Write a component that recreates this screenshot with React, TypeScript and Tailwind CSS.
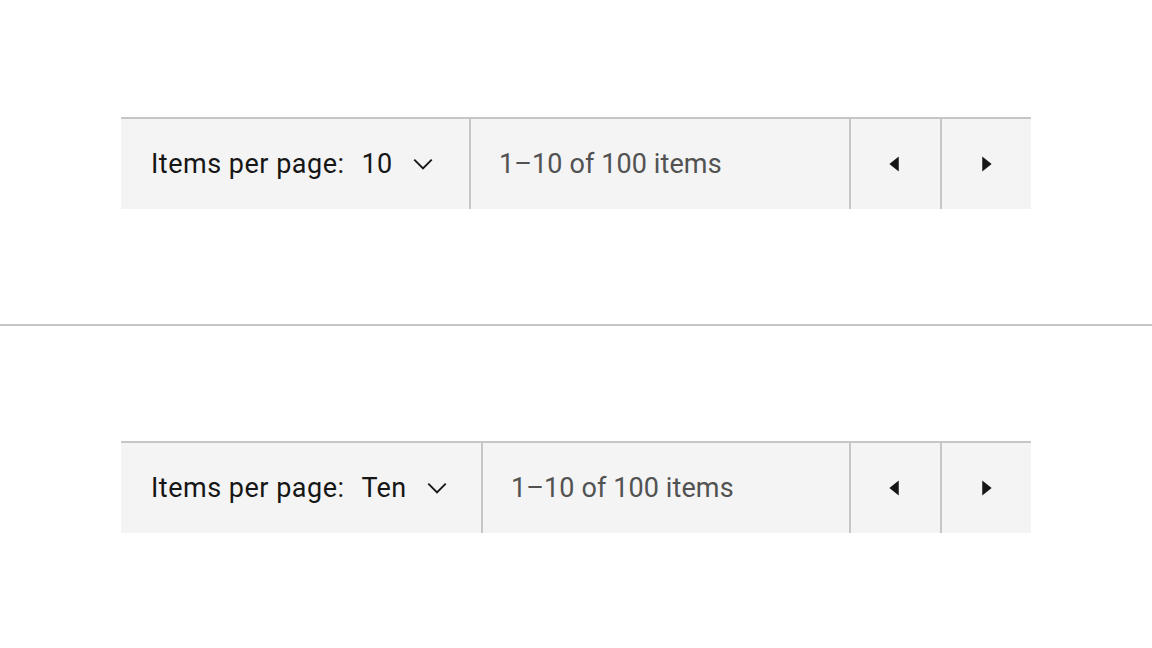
import React from "react";

const font = { fontFamily: "Roboto, 'Noto Sans', Arial, sans-serif" };

function Chevron() {
  return (
    <svg width="30" height="30" viewBox="0 0 16 16" fill="#161616">
      <path d="M8 11L3 6 3.7 5.3 8 9.6 12.3 5.3 13 6z" />
    </svg>
  );
}

function CaretLeft() {
  return (
    <svg width="30" height="30" viewBox="0 0 16 16" fill="#161616">
      <path d="M10 4L5 8 10 12z" />
    </svg>
  );
}

function CaretRight() {
  return (
    <svg width="30" height="30" viewBox="0 0 16 16" fill="#161616">
      <path d="M6 4L11 8 6 12z" />
    </svg>
  );
}

function Pagination({ value, leftWidth }: { value: string; leftWidth: string }) {
  return (
    <div className="flex h-[92px] w-[910px] border-t-2 border-[#c6c6c6] bg-[#f4f4f4]">
      <div className={`flex items-center border-r-2 border-[#c6c6c6] pl-[30px] ${leftWidth}`}>
        <span className="text-[27px] text-[#161616] tracking-[0.5px]">Items per page:</span>
        <span className="ml-[17px] text-[27px] text-[#161616] tracking-[0.3px]">{value}</span>
        <span className="ml-[16px] flex items-center">
          <Chevron />
        </span>
      </div>
      <div className="flex flex-1 items-center pl-[28px]">
        <span className="text-[27px] text-[#525252] tracking-[0.1px]">1–10 of 100 items</span>
      </div>
      <button className="flex w-[91px] items-center justify-center border-l-2 border-[#c6c6c6]">
        <span className="-ml-[2px] flex">
          <CaretLeft />
        </span>
      </button>
      <button className="flex w-[91px] items-center justify-center border-l-2 border-[#c6c6c6]">
        <span className="-ml-[2px] flex">
          <CaretRight />
        </span>
      </button>
    </div>
  );
}

export default function App() {
  return (
    <div className="flex h-[648px] w-[1152px] flex-col bg-white" style={font}>
      <div className="flex h-[324px] items-center pl-[121px] pt-[2px]">
        <Pagination value="10" leftWidth="w-[350px]" />
      </div>
      <div className="h-[2px] bg-[#c6c6c6]" />
      <div className="flex flex-1 items-center pl-[121px]">
        <Pagination value="Ten" leftWidth="w-[362px]" />
      </div>
    </div>
  );
}
